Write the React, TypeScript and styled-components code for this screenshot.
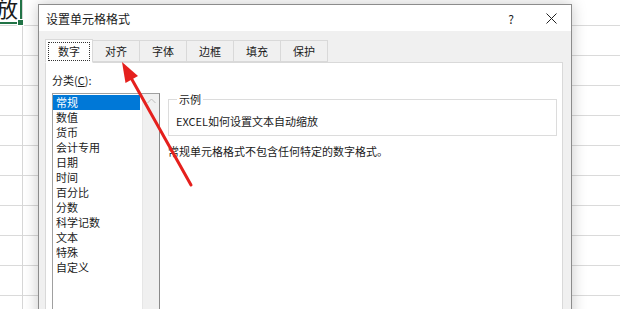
import React from 'react'
import styled, { createGlobalStyle } from 'styled-components'

const GlobalStyle = createGlobalStyle`
  html, body {
    margin: 0;
    padding: 0;
  }
  body {
    width: 620px;
    height: 309px;
    overflow: hidden;
    font-family: "Noto Sans CJK SC", "Microsoft YaHei", sans-serif;
    color: #1a1a1a;
  }
`

const Sheet = styled.div`
  position: relative;
  width: 620px;
  height: 309px;
  overflow: hidden;
  background-color: #fff;
  background-image:
    linear-gradient(90deg, transparent 22px, #d6d6d6 22px, #d6d6d6 23px, transparent 23px),
    linear-gradient(#dadada 1px, transparent 1px);
  background-size: 100% 100%, 100% 30px;
  background-position: 0 0, 0 25px;
`

const ActiveCell = styled.div`
  position: absolute;
  left: -8px;
  top: -6px;
  width: 30px;
  height: 30px;
  border-right: 2px solid #217346;
  border-bottom: 2px solid #217346;
  font-size: 22px;
  line-height: 26px;
  text-align: right;
  padding-right: 2px;
  box-sizing: border-box;
  background: #fff;

  &::after {
    content: '';
    position: absolute;
    right: -4px;
    bottom: -4px;
    width: 5px;
    height: 5px;
    background: #217346;
    border: 1px solid #fff;
  }
`

const Dialog = styled.div`
  position: absolute;
  left: 38px;
  top: 4px;
  width: 534px;
  height: 330px;
  box-sizing: border-box;
  border: 1px solid #8c8c8c;
  background: #f0f0f0;
  box-shadow: 0 0 14px rgba(0, 0, 0, 0.22);
  display: flex;
  flex-direction: column;
`

const TitleBar = styled.div`
  height: 26px;
  background: #fff;
  display: flex;
  align-items: center;
  padding-left: 7px;
  font-size: 12px;
`

const Title = styled.span`
  flex: 1;
`

const TitleButton = styled.span`
  width: 40px;
  height: 26px;
  display: flex;
  align-items: center;
  justify-content: center;
  font-size: 12px;
  color: #222;
`

const Body = styled.div`
  flex: 1;
  display: flex;
  flex-direction: column;
  padding: 9px 8px 0 6px;
`

const TabStrip = styled.div`
  display: flex;
  height: 22px;
  align-items: flex-end;
  position: relative;
  z-index: 1;
`

const Tab = styled.div<{ $active?: boolean }>`
  width: ${p => (p.$active ? 48 : 47)}px;
  height: ${p => (p.$active ? 24 : 22)}px;
  box-sizing: border-box;
  border: 1px solid #d9d9d9;
  border-left: ${p => (p.$active ? '1px solid #d9d9d9' : 'none')};
  border-bottom: ${p => (p.$active ? '1px solid #fff' : '1px solid #d9d9d9')};
  margin-bottom: ${p => (p.$active ? -1 : 0)}px;
  background: ${p => (p.$active ? '#fff' : '#f0f0f0')};
  display: flex;
  align-items: center;
  justify-content: center;
  font-size: 11px;
  position: relative;

  &::before {
    content: '';
    display: ${p => (p.$active ? 'block' : 'none')};
    position: absolute;
    inset: 2px 2px 1px 2px;
    border: 1px dotted #333;
  }
`

const Panel = styled.div`
  flex: 1;
  background: #fff;
  border: 1px solid #d9d9d9;
  padding: 10px 5px 0 6px;
  display: flex;
  flex-direction: column;
  gap: 5px;
`

const Label = styled.div`
  font-size: 11px;
  line-height: 14px;

  u {
    text-decoration: underline;
  }
`

const Columns = styled.div`
  flex: 1;
  display: flex;
  gap: 8px;
`

const ListBox = styled.div`
  width: 108px;
  box-sizing: border-box;
  border: 1px solid #a0a0a0;
  border-right-color: #8a8a8a;
  display: flex;
  margin-top: 1px;
`

const Items = styled.div`
  flex: 1;
  padding: 1px 2px 0 0;
`

const Item = styled.div<{ $selected?: boolean }>`
  height: 15px;
  line-height: 15px;
  font-size: 11px;
  padding-left: 3px;
  background: ${p => (p.$selected ? '#0078d7' : 'transparent')};
  color: ${p => (p.$selected ? '#fff' : '#1a1a1a')};
`

const ScrollBar = styled.div`
  width: 16px;
  background: #f0f0f0;
  border-left: 1px solid #e6e6e6;
  display: flex;
  justify-content: center;
  padding-top: 4px;
`

const Detail = styled.div`
  flex: 1;
  display: flex;
  flex-direction: column;
`

const Sample = styled.fieldset`
  margin: 0;
  padding: 8px 7px 7px 7px;
  border: 1px solid #dcdcdc;
  font-size: 11px;
  line-height: 14px;

  legend {
    padding: 0 2px;
    margin-left: 1px;
  }
`

const Description = styled.div`
  margin-top: 8px;
  font-size: 11px;
  line-height: 14px;
`

const ArrowLayer = styled.svg`
  position: absolute;
  left: 0;
  top: 0;
  pointer-events: none;
`

const tabs = ['数字', '对齐', '字体', '边框', '填充', '保护']
const categories = ['常规', '数值', '货币', '会计专用', '日期', '时间', '百分比', '分数', '科学记数', '文本', '特殊', '自定义']

const App = () => {
  return (
    <Sheet>
      <GlobalStyle />
      <ActiveCell>放</ActiveCell>

      <Dialog>
        <TitleBar>
          <Title>设置单元格格式</Title>
          <TitleButton>?</TitleButton>
          <TitleButton>
            <svg width="11" height="11" viewBox="0 0 11 11">
              <path d="M0.5 0.5 L10.5 10.5 M10.5 0.5 L0.5 10.5" stroke="#222" strokeWidth="1" />
            </svg>
          </TitleButton>
        </TitleBar>

        <Body>
          <TabStrip>
            {tabs.map((t, i) => (
              <Tab key={t} $active={i === 0}>
                {t}
              </Tab>
            ))}
          </TabStrip>

          <Panel>
            <Label>
              分类(<u>C</u>):
            </Label>
            <Columns>
              <ListBox>
                <Items>
                  {categories.map((c, i) => (
                    <Item key={c} $selected={i === 0}>
                      {c}
                    </Item>
                  ))}
                </Items>
                <ScrollBar>
                  <svg width="9" height="6" viewBox="0 0 9 6">
                    <path d="M0.5 5 L4.5 1 L8.5 5" stroke="#bdbdbd" strokeWidth="1" fill="none" />
                  </svg>
                </ScrollBar>
              </ListBox>

              <Detail>
                <Sample>
                  <legend>示例</legend>
                  EXCEL如何设置文本自动缩放
                </Sample>
                <Description>常规单元格格式不包含任何特定的数字格式。</Description>
              </Detail>
            </Columns>
          </Panel>
        </Body>
      </Dialog>

      <ArrowLayer width="620" height="309" viewBox="0 0 620 309">
        <line x1="191" y1="185" x2="130" y2="76" stroke="#e5201d" strokeWidth="3" strokeLinecap="round" />
        <polygon points="122,62 138,76 125.5,83" fill="#e5201d" />
      </ArrowLayer>
    </Sheet>
  )
}

export default App
